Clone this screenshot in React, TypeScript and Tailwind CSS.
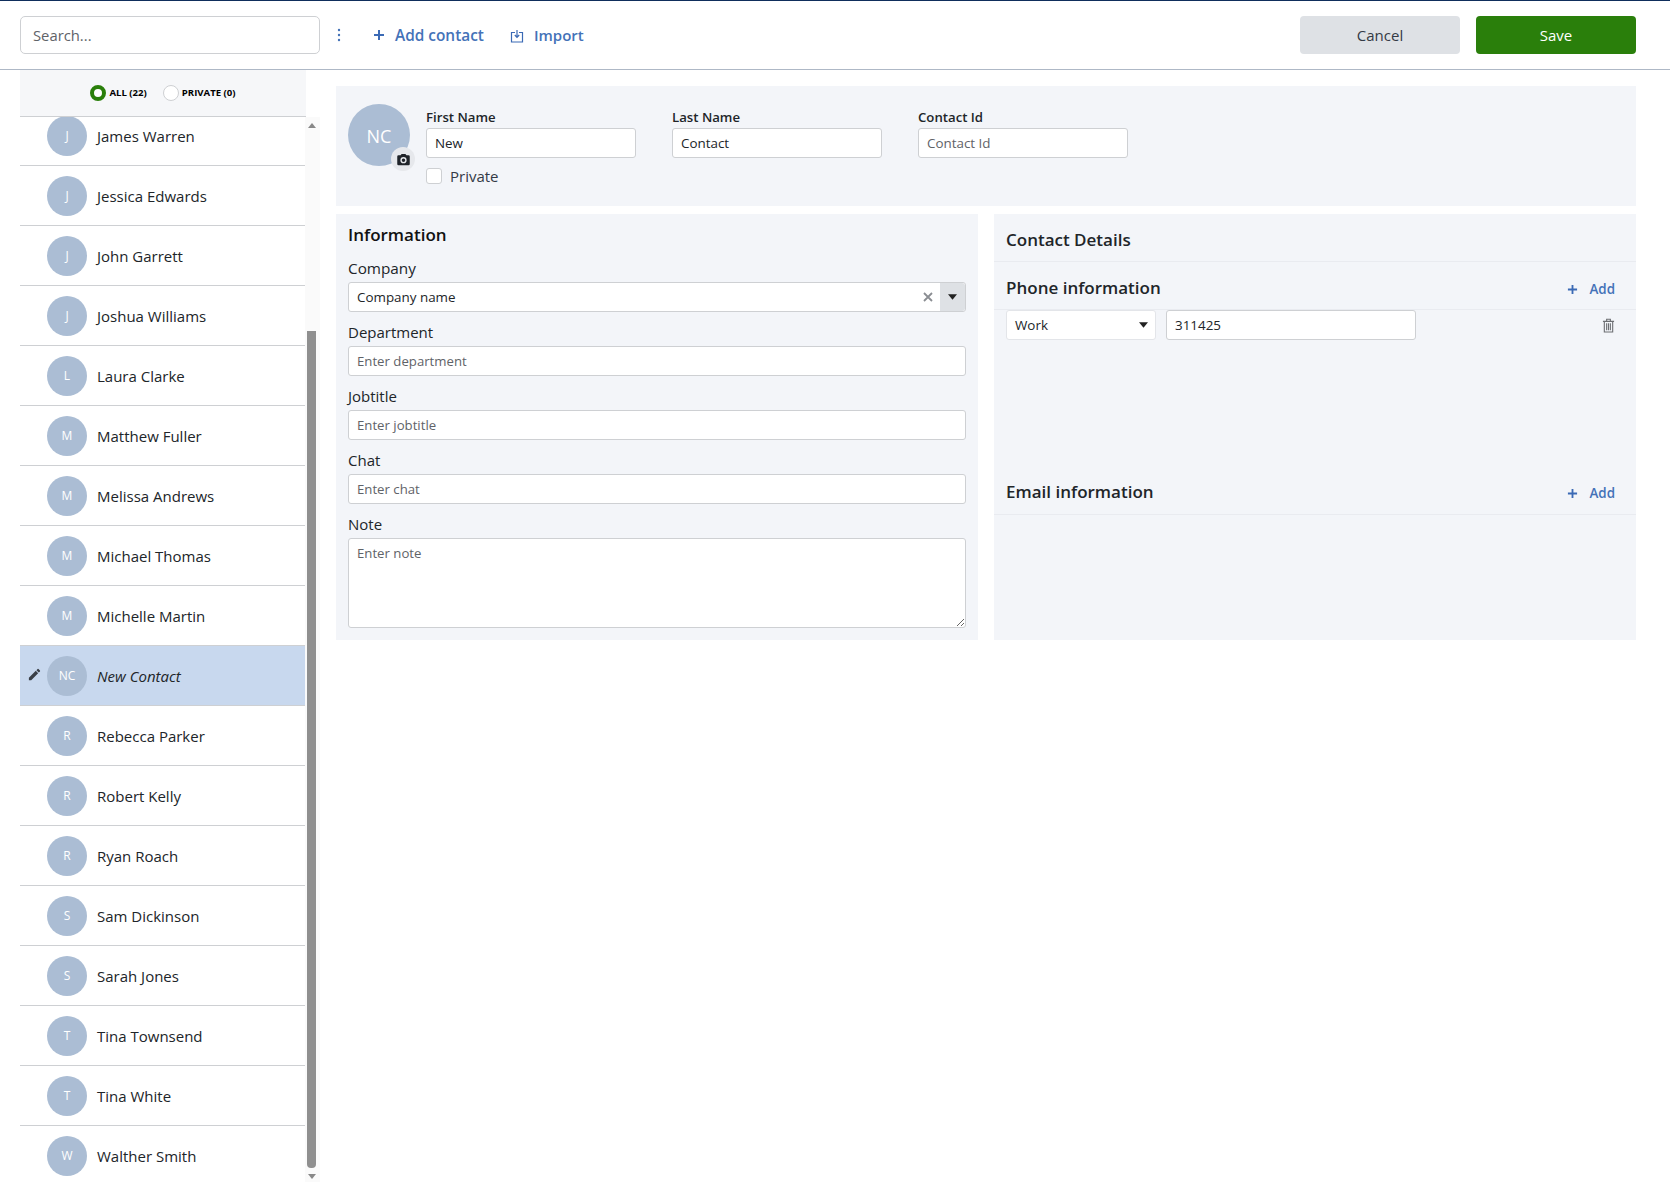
const contacts = [
  ["J", "James Warren"], ["J", "Jessica Edwards"], ["J", "John Garrett"], ["J", "Joshua Williams"], ["L", "Laura Clarke"],
  ["M", "Matthew Fuller"], ["M", "Melissa Andrews"], ["M", "Michael Thomas"], ["M", "Michelle Martin"], ["NC", "New Contact"],
  ["R", "Rebecca Parker"], ["R", "Robert Kelly"], ["R", "Ryan Roach"], ["S", "Sam Dickinson"], ["S", "Sarah Jones"],
  ["T", "Tina Townsend"], ["T", "Tina White"], ["W", "Walther Smith"],
];

function Plus({ className }: { className: string }) {
  return (
    <svg viewBox="0 0 12 12" className={className} fill="none" stroke="currentColor" strokeWidth="2">
      <path d="M6 1v10M1 6h10" />
    </svg>
  );
}

function Caret() {
  return (
    <svg viewBox="0 0 10 6" className="h-[6px] w-[9px] fill-[#222]">
      <path d="M0 0h10L5 6z" />
    </svg>
  );
}

function Field({ label, placeholder }: { label: string; placeholder: string }) {
  return (
    <div className="mt-[8px]">
      <label className="block h-[24px] text-[15px] leading-[24px] text-[#212529]">{label}</label>
      <input
        placeholder={placeholder}
        className="mt-[2px] block h-[30px] w-full rounded-[3px] border border-[#ced0d3] bg-white px-2 text-[13.2px] text-[#212529] outline-none placeholder:text-[#5f6368]"
      />
    </div>
  );
}

function NameField({ label, value, placeholder }: { label: string; value?: string; placeholder?: string }) {
  return (
    <div className="w-[210px]">
      <label className="block h-[20px] text-[13.2px] font-semibold leading-[18px] text-[#212529]">{label}</label>
      <input
        defaultValue={value}
        placeholder={placeholder}
        className="block h-[30px] w-full rounded-[3px] border border-[#ced0d3] bg-white px-2 text-[13.4px] text-[#212529] outline-none placeholder:text-[#5f6368]"
      />
    </div>
  );
}

function AddLink() {
  return (
    <span className="flex items-center gap-[11px] pt-[3px] text-[13.4px] font-semibold text-[#4472b8]">
      <Plus className="h-[11px] w-[11px] text-[#3b6ab5]" />
      Add
    </span>
  );
}

export default function App() {
  return (
    <div className="h-[1182px] overflow-hidden border-t border-[#0f2e5c] bg-white font-['Open_Sans','Noto_Sans',sans-serif] text-[#212529]">
      <header className="flex h-[69px] items-center border-b border-[#aeb8c6] pl-[20px] pr-[34px]">
        <input
          placeholder="Search..."
          className="h-[38px] w-[300px] rounded-[5px] border border-[#ced0d3] bg-white px-3 text-[14.8px] outline-none placeholder:text-[#5f6368]"
        />
        <svg viewBox="0 0 4 14" className="ml-[17px] h-[14px] w-[4px] fill-[#4472b8]">
          <circle cx="2" cy="2" r="1.2" /><circle cx="2" cy="7" r="1.2" /><circle cx="2" cy="12" r="1.2" />
        </svg>
        <span className="ml-[32px] flex items-center gap-[10px] pt-[1px] text-[15.4px] font-semibold text-[#4472b8]">
          <Plus className="h-[12px] w-[12px] text-[#3b6ab5]" />
          Add contact
        </span>
        <span className="ml-[26px] flex items-center gap-[10px] pt-[1px] text-[15px] font-semibold text-[#4472b8]">
          <svg viewBox="0 0 14 14" className="h-[14px] w-[14px]" fill="none" stroke="#3b6ab5" strokeWidth="1.2">
            <path d="M5 3.5H1.5v9.5h11V3.5H9M7 1v7M4.8 6 7 8.3 9.2 6" />
          </svg>
          Import
        </span>
        <div className="ml-auto flex gap-4">
          <button className="h-[38px] w-[160px] rounded-[4px] bg-[#dee1e5] pt-[1px] text-[15px] text-[#343a46]">Cancel</button>
          <button className="h-[38px] w-[160px] rounded-[4px] bg-[#2a7f0b] pt-[1px] text-[15px] text-white">Save</button>
        </div>
      </header>

      <div className="flex pl-[20px] pr-[34px]">
        <aside className="flex h-[1112px] w-[300px] shrink-0 flex-col">
          <div className="flex h-[47px] w-[286px] shrink-0 items-center justify-center gap-[16px] border-b border-[#ced0d3] bg-[#f6f7f9] text-[9.6px] font-bold text-black">
            <span className="flex items-center gap-[3px]">
              <span className="h-[16px] w-[16px] rounded-full border-[4px] border-[#2a7f0b] bg-white" />
              ALL (22)
            </span>
            <span className="flex items-center gap-[3px]">
              <span className="h-[16px] w-[16px] rounded-full border border-[#ced0d3] bg-white" />
              PRIVATE (0)
            </span>
          </div>
          <div className="flex min-h-0 flex-1">
            <div className="w-[285px] overflow-hidden">
              <ul className="-mt-[11px]">
                {contacts.map(([initial, name]) => {
                  const active = name === "New Contact";
                  return (
                    <li
                      key={name}
                      className={`relative flex h-[60px] items-center border-b border-[#ced0d3] pl-[27px] ${active ? "bg-[#c8d8ee]" : ""}`}
                    >
                      {active && (
                        <svg viewBox="0 0 24 24" className="absolute left-[7px] top-[21px] h-[15px] w-[15px] fill-[#3a3f47]">
                          <path d="M3 17.25V21h3.75L17.81 9.94l-3.75-3.75L3 17.25zM20.71 7.04a1 1 0 0 0 0-1.41l-2.34-2.34a1 1 0 0 0-1.41 0l-1.83 1.83 3.75 3.75 1.83-1.83z" />
                        </svg>
                      )}
                      <span className="flex h-[40px] w-[40px] items-center justify-center rounded-full bg-[#abbdd4] text-[12px] text-white">{initial}</span>
                      <span className={`ml-[10px] pt-[1px] text-[15px] text-[#212529] ${active ? "text-[15.7px] italic" : ""}`}>{name}</span>
                    </li>
                  );
                })}
              </ul>
            </div>
            <div className="flex w-[15px] flex-col items-center bg-[#fafafa] pr-[2px]">
              <svg viewBox="0 0 8 5" className="mt-[6px] h-[5px] w-[8px] fill-[#888]"><path d="M4 0l4 5H0z" /></svg>
              <div className="mt-[203px] h-[837px] w-[9px] rounded-b-[4px] bg-[#8f8f8f]" />
              <svg viewBox="0 0 8 5" className="mt-[6px] h-[5px] w-[8px] fill-[#888]"><path d="M0 0h8L4 5z" /></svg>
            </div>
          </div>
        </aside>

        <main className="ml-[16px] min-w-0 flex-1 pt-[16px]">
          <section className="flex h-[120px] bg-[#f3f5f9] pl-3 pt-[18px]">
            <div className="relative h-[62px] w-[62px] shrink-0 rounded-full bg-[#abbdd4]">
              <span className="flex h-full items-center justify-center pt-[2px] text-[18px] text-white">NC</span>
              <span className="absolute -bottom-[5px] -right-[5px] flex h-[24px] w-[24px] items-center justify-center rounded-full bg-[#e6e8ec]">
                <svg viewBox="0 0 24 24" className="h-[15px] w-[15px] fill-[#1f2329]">
                  <path d="M9 3 7.2 5H4a2 2 0 0 0-2 2v12a2 2 0 0 0 2 2h16a2 2 0 0 0 2-2V7a2 2 0 0 0-2-2h-3.2L15 3H9zm3 15a5 5 0 1 1 0-10 5 5 0 0 1 0 10zm0-2.2a2.8 2.8 0 1 0 0-5.6 2.8 2.8 0 0 0 0 5.6z" />
                </svg>
              </span>
            </div>
            <div className="ml-4">
              <div className="flex gap-[36px] pt-[4px]">
                <NameField label="First Name" value="New" />
                <NameField label="Last Name" value="Contact" />
                <NameField label="Contact Id" placeholder="Contact Id" />
              </div>
              <label className="mt-[7px] flex items-center gap-[8px] text-[15px] text-[#343a46]">
                <span className="h-[16px] w-[16px] rounded-[3px] border border-[#ced0d3] bg-white" />
                Private
              </label>
            </div>
          </section>

          <div className="mt-2 grid grid-cols-2 gap-4">
            <section className="h-[426px] bg-[#f3f5f9] px-3 pt-[9px]">
              <h2 className="h-[24px] text-[17px] font-semibold leading-[24px] text-[#111]">Information</h2>
              <div className="mt-[9px]">
                <label className="block h-[24px] text-[15.3px] leading-[24px]">Company</label>
                <div className="mt-[2px] flex h-[30px] items-center rounded-[3px] border border-[#ced0d3] bg-white pl-2 text-[13.4px]">
                  <span className="flex-1">Company name</span>
                  <svg viewBox="0 0 10 10" className="mr-[7px] h-[10px] w-[10px]" fill="none" stroke="#8a8d92" strokeWidth="1.8">
                    <path d="M1 1l8 8M9 1l-8 8" />
                  </svg>
                  <span className="flex h-full w-[25px] items-center justify-center rounded-r-[3px] bg-[#dee1e5]"><Caret /></span>
                </div>
              </div>
              <Field label="Department" placeholder="Enter department" />
              <Field label="Jobtitle" placeholder="Enter jobtitle" />
              <Field label="Chat" placeholder="Enter chat" />
              <div className="mt-[8px]">
                <label className="block h-[24px] text-[15px] leading-[24px]">Note</label>
                <textarea
                  placeholder="Enter note"
                  className="mt-[2px] block h-[90px] w-full rounded-[3px] border border-[#ced0d3] bg-white px-2 py-[5px] text-[13.2px] outline-none placeholder:text-[#5f6368]"
                />
              </div>
            </section>

            <section className="flex h-[426px] flex-col bg-[#f3f5f9]">
              <h2 className="flex h-[48px] shrink-0 items-center border-b border-[#e9ebf0] pl-3 pt-[4px] text-[17px] font-semibold">Contact Details</h2>
              <div className="h-[205px] shrink-0">
                <div className="flex h-[48px] items-center justify-between border-b border-[#e9ebf0] pl-3 pr-[21px] pt-[5px]">
                  <h3 className="text-[17px] font-semibold">Phone information</h3>
                  <AddLink />
                </div>
                <div className="flex items-center pl-3 pr-[21px]">
                  <div className="flex h-[30px] w-[150px] items-center justify-between rounded-[3px] border border-[#e3e5e9] bg-white pl-2 pr-[7px] text-[13.4px]">
                    Work <Caret />
                  </div>
                  <input
                    defaultValue="311425"
                    className="ml-[10px] h-[30px] w-[250px] rounded-[3px] border border-[#ced0d3] bg-white px-2 text-[13.4px] outline-none"
                  />
                  <svg viewBox="0 0 14 16" className="ml-auto h-[15px] w-[13px]" fill="none" stroke="#6d6f73" strokeWidth="1.2">
                    <path d="M1 3.5h12M5 3.3V1.3h4v2M2.5 3.5V15h9V3.5M5 5.5V13M7 5.500V13M9 5.5V13" />
                  </svg>
                </div>
              </div>
              <div className="flex h-[48px] shrink-0 items-center justify-between border-b border-[#e9ebf0] pl-3 pr-[21px] pt-[3px]">
                <h3 className="text-[17px] font-semibold">Email information</h3>
                <AddLink />
              </div>
            </section>
          </div>
        </main>
      </div>
    </div>
  );
}
